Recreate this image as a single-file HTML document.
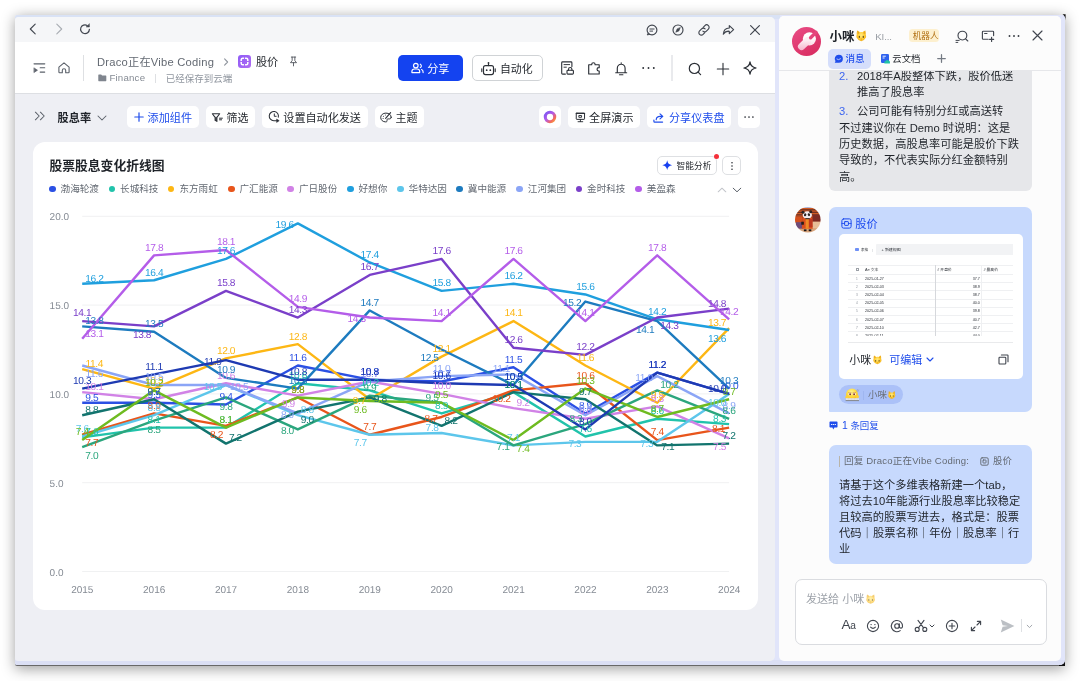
<!DOCTYPE html>
<html lang="zh-CN"><head><meta charset="utf-8"><title>股价 - 股息率</title>
<style>
*{box-sizing:border-box;margin:0;padding:0}
html,body{width:1080px;height:681px;overflow:hidden;background:#fff}
body{position:relative;font-family:"Liberation Sans","Noto Sans CJK SC",sans-serif;font-size:11.2px;color:#1F2329;-webkit-font-smoothing:antialiased}
.abs{position:absolute}
.win{position:absolute;left:14.7px;top:14.5px;width:1050.6px;height:651.7px;background:#E1E5FA;border-radius:3px 0 0 2px;box-shadow:0 2.5px 14px rgba(0,0,0,.38)}
.winb{position:absolute;left:14.7px;top:663px;width:1050.6px;height:3.4px;background:#686868;border-radius:0 0 0 2px}
.win2{position:absolute;left:14.7px;top:14.5px;width:1050.6px;height:650.5px;background:#E1E5FA;border-radius:3px 3.5px 5.5px 2px}
.blk{position:absolute;background:#111}
.main{position:absolute;left:14.9px;top:16.6px;width:759.8px;height:644.1px;background:#EEEFF4;border-radius:3.5px 5px 5px 3px;overflow:hidden}
.topbar{position:absolute;left:0;top:0;width:100%;height:25.3px;background:#F5F6F8}
.hdr{position:absolute;left:0;top:25.3px;width:100%;height:52.0px;background:#fff;border-bottom:1px solid #DDDFE3}
.t{position:absolute;white-space:nowrap;line-height:1}
.ic{position:absolute;overflow:visible}
.btn{position:absolute;top:106.2px;height:21.9px;background:#fff;border-radius:5px}
.card{position:absolute;left:33.1px;top:142px;width:724.5px;height:468.2px;background:#fff;border-radius:12px}
.chart{position:absolute;left:33px;top:142px}
.chart text{font-family:"Liberation Sans",sans-serif;text-rendering:geometricPrecision}
.chart .ax{font-size:10px;fill:#858B94}
.chart .lb text{font-size:10.2px;text-anchor:middle;letter-spacing:-0.4px}
.lg{position:absolute;top:184px;height:10px;font-size:9.6px;color:#646A73;white-space:nowrap;line-height:10px}
.lg i{position:absolute;left:0;top:1.7px;width:6.6px;height:6.6px;border-radius:50%}
.lg span{position:absolute;left:11.5px;top:0}
.chat{position:absolute;left:779.4px;top:16.2px;width:281.8px;height:644.4px;background:#FCFCFC;border-radius:5px;overflow:hidden}
#root{position:absolute;left:0;top:0;width:1080px;height:681px;overflow:hidden;will-change:transform;transform:translateZ(0)}
.wbot{position:absolute;left:14.7px;top:660px;width:1050.6px;height:5px;background:#DBDFF4;border-radius:0 0 5.5px 2px}
.wtop{position:absolute;left:14.7px;top:14.5px;width:765px;height:4px;background:#D9E2F5;border-radius:3px 0 0 0}
.em{font-size:0;line-height:0}
</style></head>
<body>
<div id="root">
<div class="win"></div><div class="winb"></div><div class="blk" style="left:1058.8px;top:657.6px;width:6.7px;height:8.9px"></div><div class="win2"></div><div class="wbot"></div><div class="wtop"></div><svg class="ic" style="left:1060px;top:12px" width="8" height="10" viewBox="1060 12 8 10"><path d="M1062.5 14.3 L1065.6 14.3 L1065.6 20.4 Q1065.3 15.8 1062.5 14.3 Z" fill="#111"/></svg>
<div class="main"><div class="topbar"></div><div class="hdr"></div></div>
<svg class="ic" style="left:28.80px;top:23.20px;" width="8" height="12" viewBox="0 0 8 12" fill="none" stroke="#41464F" stroke-width="1.1" stroke-linecap="round" stroke-linejoin="round"><path d="M6.2 1.1 L1.3 6 L6.2 10.9"/></svg>
<svg class="ic" style="left:54.90px;top:23.20px;" width="8" height="12" viewBox="0 0 8 12" fill="none" stroke="#A9ADB3" stroke-width="1.1" stroke-linecap="round" stroke-linejoin="round"><path d="M1.8 1.1 L6.7 6 L1.8 10.9"/></svg>
<svg class="ic" style="left:78.60px;top:23.40px;" width="12" height="12" viewBox="0 0 12 12" fill="none" stroke="#41464F" stroke-width="1.2" stroke-linecap="round" stroke-linejoin="round"><path d="M10.4 6.4 A4.4 4.4 0 1 1 8.2 2.4"/><path d="M10.4 1.0 V4.0 H7.4 Z" fill="#41464F" stroke-width="0.5"/></svg>
<svg class="ic" style="left:646.20px;top:23.70px;" width="12" height="12" viewBox="0 0 12 12" fill="none" stroke="#41464F" stroke-width="1.15" stroke-linecap="round" stroke-linejoin="round"><circle cx="6" cy="6" r="4.9"/><path d="M3.9 5 H8.1 M3.9 7.1 H6.6" stroke-width="1"/><path d="M2.2 9.2 L1.2 10.9 L3.6 10.4" stroke-width="1"/></svg>
<svg class="ic" style="left:672.10px;top:23.70px;" width="12" height="12" viewBox="0 0 12 12" fill="none" stroke="#41464F" stroke-width="1.15" stroke-linecap="round" stroke-linejoin="round"><circle cx="6" cy="6" r="5"/><path d="M8.2 3.8 L6.9 6.9 L3.8 8.2 L5.1 5.1 Z" fill="#41464F" stroke-width="0.6"/></svg>
<svg class="ic" style="left:697.70px;top:23.70px;" width="12" height="12" viewBox="0 0 12 12" fill="none" stroke="#41464F" stroke-width="1.15" stroke-linecap="round" stroke-linejoin="round"><path d="M5.2 3.3 L6.9 1.6 A2.45 2.45 0 0 1 10.4 5.1 L8.4 7.1 A2.45 2.45 0 0 1 4.9 7.1"/><path d="M6.8 8.7 L5.1 10.4 A2.45 2.45 0 0 1 1.6 6.9 L3.6 4.9 A2.45 2.45 0 0 1 7.1 4.9"/></svg>
<svg class="ic" style="left:722.40px;top:23.70px;" width="13" height="12" viewBox="0 0 13 12" fill="none" stroke="#41464F" stroke-width="1.15" stroke-linecap="round" stroke-linejoin="round"><path d="M7.3 1.6 L11.6 5.6 L7.3 9.6 V7.2 C4.6 7.1 2.6 8 1.3 10.2 C1.5 6.6 3.6 4.2 7.3 4 Z"/></svg>
<svg class="ic" style="left:748.80px;top:23.70px;" width="12" height="12" viewBox="0 0 12 12" fill="none" stroke="#41464F" stroke-width="1.2" stroke-linecap="round" stroke-linejoin="round"><path d="M1.6 1.6 L10.4 10.4 M10.4 1.6 L1.6 10.4"/></svg>
<svg class="ic" style="left:33.10px;top:62.20px;" width="13" height="12" viewBox="0 0 13 12" fill="none" stroke="#5A6069" stroke-width="1.15" stroke-linecap="round" stroke-linejoin="round"><path d="M1.1 1.8 H11.7" stroke-width="1.3"/><path d="M7.2 5.7 H11.7 M7.2 10.1 H11.7"/><path d="M1.2 6 L4.5 8.2 L1.2 10.4 Z" fill="#5A6069" stroke-width="0.6"/></svg>
<svg class="ic" style="left:57.95px;top:62.40px;" width="12" height="12" viewBox="0 0 12 12" fill="none" stroke="#5A6069" stroke-width="1.1" stroke-linecap="round" stroke-linejoin="round"><path d="M0.9 5.2 L6 0.9 L11.1 5.2 V10 Q11.1 10.7 10.4 10.7 H7.7 V8.4 A1.7 1.7 0 0 0 4.3 8.4 V10.7 H1.6 Q0.9 10.7 0.9 10 Z"/></svg>
<div class="abs" style="left:83.10px;top:55.30px;width:0.80px;height:25.50px;background:#DEE0E3"></div>
<div class="t" style="top:54.20px;height:16px;line-height:16px;font-size:11.2px;color:#646A73;left:97.00px;letter-spacing:0.23px;">Draco正在Vibe Coding</div>
<svg class="ic" style="left:223.30px;top:57.00px;" width="6" height="10" viewBox="0 0 6 10" fill="none" stroke="#8F959E" stroke-width="1.1" stroke-linecap="round" stroke-linejoin="round"><path d="M1.6 1.8 L4.6 5 L1.6 8.2"/></svg>
<svg class="ic" style="left:238px;top:54.8px" width="13" height="13" viewBox="0 0 13 13"><defs><linearGradient id="pg" x1="0" y1="0" x2="1" y2="1"><stop offset="0" stop-color="#8F5CF7"/><stop offset="1" stop-color="#B06CF2"/></linearGradient></defs><rect width="13" height="13" rx="3" fill="url(#pg)"/><rect x="3.2" y="3.2" width="6.6" height="6.6" rx="1.6" fill="none" stroke="#fff" stroke-width="1.5"/><path d="M6.5 2 V4 M6.5 9 V11 M2 6.5 H4 M9 6.5 H11" stroke="#A468F4" stroke-width="1.1"/></svg>
<div class="t" style="top:54.00px;height:16px;line-height:16px;font-size:11.1px;color:#1F2329;left:255.90px;">股价</div>
<svg class="ic" style="left:289.10px;top:56.10px;" width="9" height="10.8" viewBox="0 0 10 12" fill="none" stroke="#51565D" stroke-width="1.0" stroke-linecap="round" stroke-linejoin="round"><path d="M2.6 1.2 H7.4 M3.5 1.2 V5.2 L1.6 7.4 H8.4 L6.5 5.2 V1.2 M5 7.4 V11"/></svg>
<svg class="ic" style="left:97.8px;top:74.2px" width="8.6" height="7.7" viewBox="0 0 9 8"><path d="M0.3 1 Q0.3 0.4 0.9 0.4 H3.3 L4.3 1.5 H8.1 Q8.7 1.5 8.7 2.1 V6.9 Q8.7 7.5 8.1 7.5 H0.9 Q0.3 7.5 0.3 6.9 Z" fill="#7F858E"/></svg>
<div class="t" style="top:70.30px;height:16px;line-height:16px;font-size:9.7px;color:#858B94;left:109.40px;letter-spacing:0.2px;">Finance</div>
<div class="abs" style="left:155.40px;top:73.50px;width:0.70px;height:9.50px;background:#DEE0E3"></div>
<div class="t" style="top:70.60px;height:16px;line-height:16px;font-size:9.5px;color:#8F959E;left:165.70px;">已经保存到云端</div>
<div class="abs" style="left:398.40px;top:55.20px;width:64.60px;height:25.90px;background:#1443F0;border-radius:5px"></div>
<svg class="ic" style="left:410.70px;top:62.20px;" width="13" height="12" viewBox="0 0 13 12" fill="none" stroke="#fff" stroke-width="1.15" stroke-linecap="round" stroke-linejoin="round"><circle cx="4.8" cy="3.6" r="2.3"/><path d="M0.9 10.6 V9.6 A2.6 2.6 0 0 1 3.5 7 H6.1 A2.6 2.6 0 0 1 8.7 9.6 V10.6 Z"/><path d="M9.3 2.2 A1.9 1.9 0 0 1 9.3 5.6 M10.6 7.6 A2.6 2.6 0 0 1 12.1 10 V10.6"/></svg>
<div class="t" style="top:60.90px;height:16px;line-height:16px;font-size:11.1px;color:#fff;left:427.20px;">分享</div>
<div class="abs" style="left:472.40px;top:55.20px;width:70.40px;height:25.90px;background:#fff;border:1px solid #D0D3D6;border-radius:5px"></div>
<svg class="ic" style="left:481.40px;top:60.50px;" width="15" height="15" viewBox="0 0 15 15" fill="none" stroke="#2B2F36" stroke-width="1.15" stroke-linecap="round" stroke-linejoin="round"><rect x="2.5" y="4.6" width="10" height="9" rx="2"/><path d="M7.5 4.6 V2.6 M0.8 7.8 V10.6 M14.2 7.8 V10.6"/><circle cx="7.5" cy="1.9" r="0.9" fill="#2B2F36" stroke="none"/><circle cx="5.7" cy="9.2" r="0.9" fill="#2B2F36" stroke="none"/><circle cx="9.3" cy="9.2" r="0.9" fill="#2B2F36" stroke="none"/></svg>
<div class="t" style="top:61.00px;height:16px;line-height:16px;font-size:10.9px;color:#1F2329;left:499.90px;">自动化</div>
<svg class="ic" style="left:560.60px;top:61.15px;" width="13" height="14" viewBox="0 0 13 14" fill="none" stroke="#2B2F36" stroke-width="1.1" stroke-linecap="round" stroke-linejoin="round"><path d="M10.9 5.6 V1.8 Q10.9 0.9 10 0.9 H1.6 Q0.7 0.9 0.7 1.8 V12.2 Q0.7 13.1 1.6 13.1 H4.4"/><path d="M3 3.6 H8.6 M3 6.2 H5.4" stroke-width="0.95"/><rect x="6" y="9.2" width="6.4" height="3.9" rx="0.9"/><path d="M7.5 9.2 V8.2 A1.7 1.7 0 0 1 10.9 8.2 V9.2"/></svg>
<svg class="ic" style="left:588.00px;top:61.80px;" width="12" height="12.6" viewBox="0 0 12 12.6" fill="none" stroke="#2B2F36" stroke-width="1.15" stroke-linecap="round" stroke-linejoin="round"><path d="M0.7 2.8 H3.7 V2.4 A1.7 1.7 0 0 1 7.1 2.4 V2.8 H11.2 V5.7 H10.7 A1.65 1.65 0 0 0 10.7 9 H11.2 V12 H0.7 Z"/></svg>
<svg class="ic" style="left:614.90px;top:61.60px;" width="12.4" height="13.6" viewBox="0 0 12.4 13.6" fill="none" stroke="#2B2F36" stroke-width="1.15" stroke-linecap="round" stroke-linejoin="round"><path d="M2.3 10.6 V6.3 A3.9 4.1 0 0 1 10.1 6.3 V10.6 M0.7 10.8 H11.7 M4.5 12.8 H7.9 M6.2 0.9 V1.6"/></svg>
<svg class="ic" style="left:642.10px;top:66.10px;" width="13" height="4" viewBox="0 0 13 4" fill="#2B2F36" stroke="none" stroke-width="1.2" stroke-linecap="round" stroke-linejoin="round"><circle cx="1.2" cy="2" r="0.95"/><circle cx="6.5" cy="2" r="0.95"/><circle cx="11.8" cy="2" r="0.95"/></svg>
<div class="abs" style="left:671.30px;top:55.00px;width:1.50px;height:26.20px;background:#E9EAED"></div>
<svg class="ic" style="left:688.10px;top:61.50px;" width="14" height="14" viewBox="0 0 14 14" fill="none" stroke="#2B2F36" stroke-width="1.2" stroke-linecap="round" stroke-linejoin="round"><circle cx="6.4" cy="6.4" r="5.1"/><path d="M10.1 10.1 L12.6 12.6"/></svg>
<svg class="ic" style="left:716.10px;top:61.50px;" width="14" height="14" viewBox="0 0 14 14" fill="none" stroke="#2B2F36" stroke-width="1.1" stroke-linecap="round" stroke-linejoin="round"><path d="M7 1.3 V12.7 M1.3 7 H12.7"/></svg>
<svg class="ic" style="left:743.40px;top:61.10px;" width="14.4" height="14.4" viewBox="0 0 14.4 14.4" fill="none" stroke="#2B2F36" stroke-width="1.2" stroke-linecap="round" stroke-linejoin="round"><path d="M7 0.9 C7.5 4.6 9.2 6.4 13.1 7 C9.2 7.6 7.5 9.4 7 13.1 C6.5 9.4 4.8 7.6 0.9 7 C4.8 6.4 6.5 4.6 7 0.9 Z"/></svg>
<svg class="ic" style="left:34.00px;top:111.30px;" width="12" height="10" viewBox="0 0 12 10" fill="none" stroke="#5A6069" stroke-width="1.05" stroke-linecap="round" stroke-linejoin="round"><path d="M1.4 1.2 L5.2 5 L1.4 8.8 M6.4 1.2 L10.2 5 L6.4 8.8"/></svg>
<div class="t" style="top:110.00px;height:16px;line-height:16px;font-size:11.2px;color:#1F2329;left:57.50px;font-weight:700;">股息率</div>
<svg class="ic" style="left:96.90px;top:114.90px;" width="10" height="6" viewBox="0 0 10 6" fill="none" stroke="#5A6069" stroke-width="1.05" stroke-linecap="round" stroke-linejoin="round"><path d="M1 1 L5 5 L9 1"/></svg>
<div class="abs" style="left:127.00px;top:106.20px;width:71.80px;height:21.90px;background:#fff;border-radius:5px"></div>
<svg class="ic" style="left:133.60px;top:112.30px;" width="10" height="10" viewBox="0 0 10 10" fill="none" stroke="#1F4DEB" stroke-width="1.2" stroke-linecap="round" stroke-linejoin="round"><path d="M5 0.8 V9.2 M0.8 5 H9.2"/></svg>
<div class="t" style="top:109.90px;height:16px;line-height:16px;font-size:11.15px;color:#1F4DEB;left:147.50px;">添加组件</div>
<div class="abs" style="left:205.90px;top:106.20px;width:49.10px;height:21.90px;background:#fff;border-radius:5px"></div>
<svg class="ic" style="left:211.00px;top:112.60px;" width="12" height="10" viewBox="0 0 12 10" fill="none" stroke="#2B2F36" stroke-width="1.05" stroke-linecap="round" stroke-linejoin="round"><path d="M1.3 0.8 H8.7 L5.9 4.4 V8.4 L4.1 7.4 V4.4 Z"/><path d="M4.6 4.6 V7.4 L5.4 7.9 V4.6 Z" fill="#2B2F36" stroke-width="0.6"/><path d="M8.5 5.2 H11.4 M8.5 6.8 H10.6" stroke-width="1"/></svg>
<div class="t" style="top:109.90px;height:16px;line-height:16px;font-size:10.9px;color:#1F2329;left:226.60px;">筛选</div>
<div class="abs" style="left:262.00px;top:106.20px;width:106.00px;height:21.90px;background:#fff;border-radius:5px"></div>
<svg class="ic" style="left:267.50px;top:111.40px;" width="12" height="12" viewBox="0 0 12 12" fill="none" stroke="#2B2F36" stroke-width="1.05" stroke-linecap="round" stroke-linejoin="round"><path d="M10.3 6.2 A4.6 4.6 0 1 0 5.8 9.7 H9"/><path d="M6.3 2.9 V5.3 H8.2" stroke-width="1"/><path d="M8.9 8.2 L11.2 9.7 L8.9 11.2 Z" fill="#2B2F36" stroke-width="0.6"/></svg>
<div class="t" style="top:109.90px;height:16px;line-height:16px;font-size:11.1px;color:#1F2329;left:283.30px;">设置自动化发送</div>
<div class="abs" style="left:375.00px;top:106.20px;width:49.30px;height:21.90px;background:#fff;border-radius:5px"></div>
<svg class="ic" style="left:380.30px;top:111.90px;" width="12" height="11" viewBox="0 0 12 11" fill="none" stroke="#2B2F36" stroke-width="1.0" stroke-linecap="round" stroke-linejoin="round"><path d="M11.2 5.3 C11.2 2.7 8.8 1.1 5.9 1.1 C3 1.1 0.7 3 0.7 5.5 C0.7 8 2.9 9.9 5.7 9.9 C6.9 9.9 7.3 9.2 7 8.4 C6.7 7.5 7.3 6.9 8.2 6.9 H9.5 C10.5 6.9 11.2 6.3 11.2 5.3 Z"/><path d="M10.6 0.6 L5.6 6.3" stroke-width="1.1"/><circle cx="3.4" cy="4.2" r="0.55" fill="#2B2F36" stroke="none"/><circle cx="3.1" cy="6.5" r="0.55" fill="#2B2F36" stroke="none"/><circle cx="5.4" cy="3" r="0.5" fill="#2B2F36" stroke="none"/></svg>
<div class="t" style="top:109.90px;height:16px;line-height:16px;font-size:11.0px;color:#1F2329;left:395.50px;">主题</div>
<div class="abs" style="left:538.90px;top:106.20px;width:22.40px;height:21.90px;background:#fff;border-radius:5px"></div>
<svg class="ic" style="left:543.2px;top:110.4px" width="14" height="14" viewBox="0 0 14 14"><defs><linearGradient id="rg" x1="0" y1="0" x2="1" y2="1"><stop offset="0" stop-color="#7A55F5"/><stop offset="0.45" stop-color="#B45CE4"/><stop offset="0.8" stop-color="#F56A5A"/><stop offset="1" stop-color="#F8A33E"/></linearGradient></defs><circle cx="7" cy="7" r="4.7" fill="none" stroke="url(#rg)" stroke-width="3.1"/></svg>
<div class="abs" style="left:568.10px;top:106.20px;width:71.90px;height:21.90px;background:#fff;border-radius:5px"></div>
<svg class="ic" style="left:574.60px;top:112.40px;" width="10.8" height="10.8" viewBox="0 0 12 12" fill="none" stroke="#2B2F36" stroke-width="1.1" stroke-linecap="round" stroke-linejoin="round"><rect x="1.4" y="1.4" width="9.2" height="6.8" rx="0.6"/><path d="M1.4 1.6 H10.6" stroke-width="1.5"/><path d="M6 8.2 V10.6 M3.4 10.8 H8.6 M4.7 3.9 H7.3 V5.9 H4.7 Z" stroke-width="1.05"/></svg>
<div class="t" style="top:109.90px;height:16px;line-height:16px;font-size:11.1px;color:#1F2329;left:589.10px;">全屏演示</div>
<div class="abs" style="left:647.20px;top:106.20px;width:83.90px;height:21.90px;background:#fff;border-radius:5px"></div>
<svg class="ic" style="left:653.40px;top:112.60px;" width="11" height="10" viewBox="0 0 11 10" fill="none" stroke="#1F4DEB" stroke-width="1.15" stroke-linecap="round" stroke-linejoin="round"><path d="M7 0.9 L9.8 3.4 L7 5.9 M9.6 3.4 H7 C4.8 3.4 3.4 4.6 3.2 6.6"/><path d="M0.9 7 V8.4 Q0.9 9.1 1.6 9.1 H9.6"/></svg>
<div class="t" style="top:109.90px;height:16px;line-height:16px;font-size:11.1px;color:#1F4DEB;left:669.00px;">分享仪表盘</div>
<div class="abs" style="left:737.80px;top:106.20px;width:22.40px;height:21.90px;background:#fff;border-radius:5px"></div>
<svg class="ic" style="left:743.00px;top:115.30px;" width="12" height="4" viewBox="0 0 12 4" fill="#2B2F36" stroke="none" stroke-width="1.2" stroke-linecap="round" stroke-linejoin="round"><circle cx="2.1" cy="2" r="0.85"/><circle cx="6" cy="2" r="0.85"/><circle cx="9.9" cy="2" r="0.85"/></svg>
<div class="card"></div>
<div class="t" style="top:157.30px;height:18px;line-height:18px;font-size:12.8px;color:#1F2329;left:49.40px;font-weight:700;">股票股息变化折线图</div>
<div class="abs" style="left:657.20px;top:155.90px;width:59.50px;height:18.80px;background:#fff;border:1px solid #DEE0E3;border-radius:5px"></div>
<svg class="ic" style="left:662.3px;top:160.3px" width="10.4" height="10.4" viewBox="0 0 14 14"><path d="M7 0.4 C7.6 4.4 9.6 6.4 13.6 7 C9.6 7.6 7.6 9.6 7 13.6 C6.4 9.6 4.4 7.6 0.4 7 C4.4 6.4 6.4 4.4 7 0.4 Z" fill="#1740F0"/></svg>
<div class="t" style="top:158.20px;height:16px;line-height:16px;font-size:8.7px;color:#1F2329;left:676.60px;">智能分析</div>
<div class="abs" style="left:713.9px;top:154px;width:5.2px;height:5.2px;border-radius:50%;background:#F5303A"></div>
<div class="abs" style="left:722.20px;top:155.90px;width:18.90px;height:18.80px;background:#fff;border:1px solid #DEE0E3;border-radius:5px"></div>
<svg class="ic" style="left:729.70px;top:159.60px;" width="4" height="12" viewBox="0 0 4 12" fill="#2B2F36" stroke="none" stroke-width="1.2" stroke-linecap="round" stroke-linejoin="round"><circle cx="2" cy="2.8" r="0.8"/><circle cx="2" cy="6" r="0.8"/><circle cx="2" cy="9.2" r="0.8"/></svg>
<div class="lg" style="left:49.1px"><i style="background:#2B50E4"></i><span>渤海轮渡</span></div>
<div class="lg" style="left:108.6px"><i style="background:#21C3AB"></i><span>长城科技</span></div>
<div class="lg" style="left:167.9px"><i style="background:#FDB714"></i><span>东方雨虹</span></div>
<div class="lg" style="left:228.0px"><i style="background:#E8551B"></i><span>广汇能源</span></div>
<div class="lg" style="left:287.4px"><i style="background:#D182E6"></i><span>广日股份</span></div>
<div class="lg" style="left:347.0px"><i style="background:#1F9FDE"></i><span>好想你</span></div>
<div class="lg" style="left:397.1px"><i style="background:#5DC6EB"></i><span>华特达因</span></div>
<div class="lg" style="left:456.3px"><i style="background:#1D7BBF"></i><span>冀中能源</span></div>
<div class="lg" style="left:516.3px"><i style="background:#8BA5F6"></i><span>江河集团</span></div>
<div class="lg" style="left:575.6px"><i style="background:#7A3FC9"></i><span>金时科技</span></div>
<div class="lg" style="left:635.3px"><i style="background:#B45DE9"></i><span>美盈森</span></div>
<svg class="ic" style="left:716.70px;top:186.90px;" width="10" height="6" viewBox="0 0 10 6" fill="none" stroke="#C2C5CA" stroke-width="1.05" stroke-linecap="round" stroke-linejoin="round"><path d="M1.2 4.8 L5 1.2 L8.8 4.8"/></svg>
<svg class="ic" style="left:732.30px;top:187.20px;" width="10" height="6" viewBox="0 0 10 6" fill="none" stroke="#5A6069" stroke-width="1.0" stroke-linecap="round" stroke-linejoin="round"><path d="M1.2 1.2 L5 4.8 L8.8 1.2"/></svg>
<svg class="chart" width="725" height="469" viewBox="33 142 725 469">
<line x1="82.2" x2="729.1" y1="571.50" y2="571.50" stroke="#F0F1F2" stroke-width="1"/>
<text class="ax" x="49.6" y="575.90">0.0</text>
<line x1="82.2" x2="729.1" y1="482.70" y2="482.70" stroke="#F0F1F2" stroke-width="1"/>
<text class="ax" x="49.6" y="486.88">5.0</text>
<line x1="82.2" x2="729.1" y1="393.90" y2="393.90" stroke="#F0F1F2" stroke-width="1"/>
<text class="ax" x="49.6" y="397.85">10.0</text>
<line x1="82.2" x2="729.1" y1="305.10" y2="305.10" stroke="#F0F1F2" stroke-width="1"/>
<text class="ax" x="49.6" y="308.82">15.0</text>
<line x1="82.2" x2="729.1" y1="216.30" y2="216.30" stroke="#F0F1F2" stroke-width="1"/>
<text class="ax" x="49.6" y="219.80">20.0</text>
<text class="ax" text-anchor="middle" x="82.30" y="593.4">2015</text>
<text class="ax" text-anchor="middle" x="154.18" y="593.4">2016</text>
<text class="ax" text-anchor="middle" x="226.06" y="593.4">2017</text>
<text class="ax" text-anchor="middle" x="297.94" y="593.4">2018</text>
<text class="ax" text-anchor="middle" x="369.82" y="593.4">2019</text>
<text class="ax" text-anchor="middle" x="441.70" y="593.4">2020</text>
<text class="ax" text-anchor="middle" x="513.58" y="593.4">2021</text>
<text class="ax" text-anchor="middle" x="585.46" y="593.4">2022</text>
<text class="ax" text-anchor="middle" x="657.34" y="593.4">2023</text>
<text class="ax" text-anchor="middle" x="729.22" y="593.4">2024</text>
<polyline fill="none" stroke="#2B50E4" stroke-width="2.4" stroke-linejoin="round" stroke-linecap="butt" points="82.20,402.78 154.08,402.78 225.96,404.56 297.84,365.48 369.72,379.69 441.60,381.47 513.48,367.26 585.36,413.44 657.24,372.59 729.12,393.90"/>
<polyline fill="none" stroke="#21C3AB" stroke-width="2.4" stroke-linejoin="round" stroke-linecap="butt" points="82.20,437.41 154.08,427.64 225.96,427.64 297.84,383.24 369.72,390.35 441.60,413.44 513.48,392.12 585.36,436.52 657.24,418.76 729.12,424.09"/>
<polyline fill="none" stroke="#FDB714" stroke-width="2.4" stroke-linejoin="round" stroke-linecap="butt" points="82.20,369.04 154.08,388.57 225.96,358.38 297.84,344.17 369.72,399.23 441.60,356.60 513.48,321.08 585.36,365.48 657.24,402.78 729.12,328.19"/>
<polyline fill="none" stroke="#E8551B" stroke-width="2.4" stroke-linejoin="round" stroke-linecap="butt" points="82.20,434.75 154.08,413.44 225.96,425.87 297.84,397.45 369.72,434.75 441.60,416.99 513.48,390.35 585.36,383.24 657.24,440.08 729.12,427.64"/>
<polyline fill="none" stroke="#D182E6" stroke-width="2.4" stroke-linejoin="round" stroke-linecap="butt" points="82.20,392.12 154.08,399.23 225.96,383.24 297.84,395.68 369.72,381.47 441.60,393.90 513.48,408.11 585.36,418.76 657.24,406.33 729.12,438.30"/>
<polyline fill="none" stroke="#1F9FDE" stroke-width="2.4" stroke-linejoin="round" stroke-linecap="butt" points="82.20,283.79 154.08,280.24 225.96,258.92 297.84,223.40 369.72,262.48 441.60,290.89 513.48,283.79 585.36,294.44 657.24,319.31 729.12,329.96"/>
<polyline fill="none" stroke="#5DC6EB" stroke-width="2.4" stroke-linejoin="round" stroke-linecap="butt" points="82.20,436.52 154.08,415.21 225.96,385.02 297.84,415.21 369.72,434.75 441.60,432.97 513.48,445.40 585.36,441.85 657.24,441.85 729.12,393.90"/>
<polyline fill="none" stroke="#1D7BBF" stroke-width="2.4" stroke-linejoin="round" stroke-linecap="butt" points="82.20,326.41 154.08,331.74 225.96,377.92 297.84,388.57 369.72,310.43 441.60,349.50 513.48,385.02 585.36,301.55 657.24,321.08 729.12,388.57"/>
<polyline fill="none" stroke="#8BA5F6" stroke-width="2.4" stroke-linejoin="round" stroke-linecap="butt" points="82.20,365.48 154.08,385.02 225.96,385.02 297.84,413.44 369.72,381.47 441.60,376.14 513.48,374.36 585.36,415.21 657.24,376.14 729.12,413.44"/>
<polyline fill="none" stroke="#7A3FC9" stroke-width="2.4" stroke-linejoin="round" stroke-linecap="butt" points="82.20,321.08 154.08,326.41 225.96,290.89 297.84,317.53 369.72,274.91 441.60,258.92 513.48,347.72 585.36,354.83 657.24,317.53 729.12,308.65"/>
<polyline fill="none" stroke="#B45DE9" stroke-width="2.4" stroke-linejoin="round" stroke-linecap="butt" points="82.20,338.84 154.08,255.37 225.96,250.04 297.84,306.88 369.72,317.53 441.60,321.08 513.48,258.92 585.36,321.08 657.24,255.37 729.12,319.31"/>
<polyline fill="none" stroke="#2BA67D" stroke-width="2.4" stroke-linejoin="round" stroke-linecap="butt" points="82.20,447.18 154.08,420.54 225.96,397.45 297.84,429.42 369.72,395.68 441.60,402.78 513.48,445.40 585.36,424.09 657.24,390.35 729.12,418.76"/>
<polyline fill="none" stroke="#12746E" stroke-width="2.4" stroke-linejoin="round" stroke-linecap="butt" points="82.20,415.21 154.08,399.23 225.96,443.63 297.84,411.66 369.72,397.45 441.60,425.87 513.48,392.12 585.36,399.23 657.24,445.40 729.12,443.63"/>
<polyline fill="none" stroke="#6EBB20" stroke-width="2.4" stroke-linejoin="round" stroke-linecap="butt" points="82.20,440.08 154.08,390.35 225.96,427.64 297.84,397.45 369.72,401.00 441.60,402.78 513.48,440.08 585.36,388.57 657.24,416.99 729.12,399.23"/>
<polyline fill="none" stroke="#1E3AB2" stroke-width="2.4" stroke-linejoin="round" stroke-linecap="butt" points="82.20,388.57 154.08,374.36 225.96,360.16 297.84,379.69 369.72,379.69 441.60,383.24 513.48,385.02 585.36,429.42 657.24,372.59 729.12,393.90"/>
<g class="lb" fill="#2B50E4">
<text x="91.7" y="400.6">9.5</text>
<text x="154.1" y="398.1">9.5</text>
<text x="226.0" y="399.9">9.4</text>
<text x="297.8" y="360.8">11.6</text>
<text x="369.7" y="375.0">10.8</text>
<text x="441.6" y="376.8">10.7</text>
<text x="513.5" y="362.6">11.5</text>
<text x="585.4" y="408.8">8.9</text>
<text x="657.2" y="367.9">11.2</text>
<text x="729.1" y="389.2">10.0</text>
</g>
<g class="lb" fill="#21C3AB">
<text x="91.7" y="435.2">7.6</text>
<text x="154.1" y="423.0">8.1</text>
<text x="226.0" y="423.0">8.1</text>
<text x="297.8" y="378.6">10.6</text>
<text x="369.7" y="385.7">10.2</text>
<text x="441.6" y="408.8">8.9</text>
<text x="513.5" y="387.5">10.1</text>
<text x="585.4" y="431.9">7.6</text>
<text x="657.2" y="414.1">8.6</text>
<text x="719.6" y="421.9">8.3</text>
</g>
<g class="lb" fill="#FDB714">
<text x="94.3" y="366.8">11.4</text>
<text x="154.1" y="383.9">10.3</text>
<text x="226.0" y="353.7">12.0</text>
<text x="297.8" y="339.5">12.8</text>
<text x="359.2" y="403.9">9.7</text>
<text x="441.6" y="352.0">12.1</text>
<text x="513.5" y="316.4">14.1</text>
<text x="585.4" y="360.8">11.6</text>
<text x="657.2" y="398.1">9.5</text>
<text x="717.0" y="326.0">13.7</text>
</g>
<g class="lb" fill="#E8551B">
<text x="91.7" y="446.4">7.7</text>
<text x="154.1" y="408.8">8.9</text>
<text x="216.5" y="437.6">8.2</text>
<text x="297.8" y="392.8">9.8</text>
<text x="369.7" y="430.1">7.7</text>
<text x="431.1" y="421.7">8.7</text>
<text x="501.4" y="402.0">10.2</text>
<text x="585.4" y="378.6">10.6</text>
<text x="657.2" y="435.4">7.4</text>
<text x="718.6" y="432.3">8.1</text>
</g>
<g class="lb" fill="#D182E6">
<text x="94.3" y="389.9">10.1</text>
<text x="154.1" y="394.6">9.7</text>
<text x="226.0" y="378.6">10.6</text>
<text x="288.4" y="407.4">9.9</text>
<text x="369.7" y="376.8">10.7</text>
<text x="441.6" y="389.2">10.0</text>
<text x="523.0" y="405.9">9.2</text>
<text x="585.4" y="414.1">8.6</text>
<text x="657.2" y="401.7">9.3</text>
<text x="719.6" y="450.0">7.5</text>
</g>
<g class="lb" fill="#1F9FDE">
<text x="94.3" y="281.6">16.2</text>
<text x="154.1" y="275.6">16.4</text>
<text x="226.0" y="254.3">17.6</text>
<text x="284.7" y="228.1">19.6</text>
<text x="369.7" y="257.8">17.4</text>
<text x="441.6" y="286.2">15.8</text>
<text x="513.5" y="279.1">16.2</text>
<text x="585.4" y="289.8">15.6</text>
<text x="657.2" y="314.7">14.2</text>
<text x="717.0" y="341.7">13.6</text>
</g>
<g class="lb" fill="#5DC6EB">
<text x="82.2" y="431.9">7.6</text>
<text x="154.1" y="410.6">8.8</text>
<text x="212.8" y="389.7">10.5</text>
<text x="307.3" y="413.0">8.8</text>
<text x="360.2" y="446.4">7.7</text>
<text x="432.1" y="430.8">7.8</text>
<text x="513.5" y="440.8">7.1</text>
<text x="574.9" y="446.6">7.3</text>
<text x="646.8" y="446.6">7.3</text>
<text x="717.0" y="405.6">10.0</text>
</g>
<g class="lb" fill="#1D7BBF">
<text x="94.3" y="324.2">13.8</text>
<text x="154.1" y="327.1">13.5</text>
<text x="226.0" y="373.3">10.9</text>
<text x="297.8" y="383.9">10.3</text>
<text x="369.7" y="305.8">14.7</text>
<text x="429.5" y="361.2">12.5</text>
<text x="513.5" y="380.4">10.5</text>
<text x="572.2" y="306.2">15.2</text>
<text x="645.1" y="332.8">14.1</text>
<text x="729.1" y="383.9">10.3</text>
</g>
<g class="lb" fill="#8BA5F6">
<text x="94.3" y="377.2">11.6</text>
<text x="154.1" y="380.4">10.5</text>
<text x="239.1" y="389.7">10.5</text>
<text x="287.4" y="418.1">8.9</text>
<text x="369.7" y="376.8">10.7</text>
<text x="441.6" y="371.5">11.0</text>
<text x="501.4" y="372.2">11.1</text>
<text x="585.4" y="410.6">8.8</text>
<text x="644.1" y="380.8">11.0</text>
<text x="729.1" y="408.8">8.9</text>
</g>
<g class="lb" fill="#7A3FC9">
<text x="82.2" y="316.4">14.1</text>
<text x="142.0" y="338.1">13.8</text>
<text x="226.0" y="286.2">15.8</text>
<text x="297.8" y="312.9">14.3</text>
<text x="369.7" y="270.3">16.7</text>
<text x="441.6" y="254.3">17.6</text>
<text x="513.5" y="343.1">12.6</text>
<text x="585.4" y="350.2">12.2</text>
<text x="669.4" y="329.2">14.3</text>
<text x="717.0" y="306.5">14.8</text>
</g>
<g class="lb" fill="#B45DE9">
<text x="94.3" y="336.6">13.1</text>
<text x="154.1" y="250.7">17.8</text>
<text x="226.0" y="245.4">18.1</text>
<text x="297.8" y="302.2">14.9</text>
<text x="356.6" y="322.2">14.3</text>
<text x="441.6" y="316.4">14.1</text>
<text x="513.5" y="254.3">17.6</text>
<text x="585.4" y="316.4">14.1</text>
<text x="657.2" y="250.7">17.8</text>
<text x="729.1" y="314.7">14.2</text>
</g>
<g class="lb" fill="#2BA67D">
<text x="91.7" y="458.9">7.0</text>
<text x="154.1" y="433.0">8.5</text>
<text x="226.0" y="410.0">9.8</text>
<text x="287.4" y="434.1">8.0</text>
<text x="369.7" y="391.0">9.9</text>
<text x="432.1" y="400.6">9.5</text>
<text x="503.0" y="450.1">7.1</text>
<text x="575.9" y="421.9">8.3</text>
<text x="669.4" y="388.1">10.2</text>
<text x="729.1" y="414.1">8.6</text>
</g>
<g class="lb" fill="#12746E">
<text x="91.7" y="413.0">8.8</text>
<text x="154.1" y="394.6">9.7</text>
<text x="235.4" y="441.4">7.2</text>
<text x="307.3" y="423.4">9.0</text>
<text x="380.2" y="402.2">9.8</text>
<text x="451.1" y="423.7">8.2</text>
<text x="513.5" y="387.5">10.1</text>
<text x="585.4" y="394.6">9.7</text>
<text x="667.7" y="450.1">7.1</text>
<text x="729.1" y="439.0">7.2</text>
</g>
<g class="lb" fill="#6EBB20">
<text x="82.2" y="435.4">7.4</text>
<text x="154.1" y="385.7">10.2</text>
<text x="226.0" y="423.0">8.1</text>
<text x="297.8" y="392.8">9.8</text>
<text x="360.2" y="412.7">9.6</text>
<text x="441.6" y="398.1">9.5</text>
<text x="523.0" y="451.8">7.4</text>
<text x="585.4" y="383.9">10.3</text>
<text x="657.2" y="412.3">8.7</text>
<text x="729.1" y="394.6">9.7</text>
</g>
<g class="lb" fill="#1E3AB2">
<text x="82.2" y="383.9">10.3</text>
<text x="154.1" y="369.7">11.1</text>
<text x="212.8" y="364.9">11.9</text>
<text x="297.8" y="375.0">10.8</text>
<text x="369.7" y="375.0">10.8</text>
<text x="441.6" y="378.6">10.6</text>
<text x="513.5" y="380.4">10.5</text>
<text x="585.4" y="424.8">8.0</text>
<text x="657.2" y="367.9">11.2</text>
<text x="717.0" y="391.7">10.0</text>
</g>
</svg>
<div class="chat"></div>
<div class="abs" style="left:829.30px;top:60.00px;width:202.80px;height:130.60px;background:#E6E7EA;border-radius:6px"></div>
<div class="t" style="top:67.80px;height:16px;line-height:16px;font-size:11.2px;color:#3D66F0;left:839.00px;">2.</div>
<div class="t" style="top:67.80px;height:16px;line-height:16px;font-size:11.25px;color:#1F2329;left:857.00px;">2018年A股整体下跌，股价低迷</div>
<div class="t" style="top:84.40px;height:16px;line-height:16px;font-size:11.25px;color:#1F2329;left:857.00px;">推高了股息率</div>
<div class="t" style="top:103.00px;height:16px;line-height:16px;font-size:11.2px;color:#3D66F0;left:839.00px;">3.</div>
<div class="t" style="top:103.00px;height:16px;line-height:16px;font-size:11.25px;color:#1F2329;left:857.00px;">公司可能有特别分红或高送转</div>
<div class="t" style="top:119.90px;height:16px;line-height:16px;font-size:11.25px;color:#1F2329;left:839.00px;">不过建议你在 Demo 时说明：这是</div>
<div class="t" style="top:136.10px;height:16px;line-height:16px;font-size:11.25px;color:#1F2329;left:839.00px;">历史数据，高股息率可能是股价下跌</div>
<div class="t" style="top:152.30px;height:16px;line-height:16px;font-size:11.25px;color:#1F2329;left:839.00px;">导致的，不代表实际分红金额特别</div>
<div class="t" style="top:168.70px;height:16px;line-height:16px;font-size:11.25px;color:#1F2329;left:839.00px;">高。</div>
<div class="abs" style="left:779.40px;top:16.20px;width:281.80px;height:54.90px;background:#FCFCFC;border-bottom:1px solid #E6E7EA;border-radius:5px 5px 0 0"></div>
<svg class="ic" style="left:792px;top:26.9px" width="29" height="29" viewBox="0 0 29 29"><defs><linearGradient id="av" x1="0" y1="0" x2="0.6" y2="1"><stop offset="0" stop-color="#E94D86"/><stop offset="1" stop-color="#DA2F63"/></linearGradient><linearGradient id="wr" x1="0" y1="0" x2="0" y2="1"><stop offset="0.35" stop-color="#fff"/><stop offset="1" stop-color="#FBDCE7"/></linearGradient><linearGradient id="wr2" gradientUnits="userSpaceOnUse" x1="0" y1="13" x2="0" y2="23"><stop offset="0" stop-color="#FDEEF3"/><stop offset="1" stop-color="#F6B6CD"/></linearGradient></defs><circle cx="14.5" cy="14.5" r="14.5" fill="url(#av)"/><g transform="rotate(0)"><circle cx="17.4" cy="11.8" r="6.6" fill="url(#wr)"/><path d="M15.4 13.8 L9.6 19.5" stroke="url(#wr2)" stroke-width="7.3" stroke-linecap="round" fill="none"/><path d="M18.6 10.8 L24 5.4" stroke="#E5467C" stroke-width="3.4" stroke-linecap="round"/></g></svg>
<div class="t" style="top:27.80px;height:18px;line-height:18px;font-size:12.5px;color:#1F2329;left:829.50px;font-weight:700;">小咪<span class="em">🐱</span></div>
<svg class="ic" style="left:856.30px;top:29.63px;opacity:1" width="10.5" height="11.45" viewBox="0 0 20 22"><defs><radialGradient id="cg1" cx="0.5" cy="0.45" r="0.6"><stop offset="0" stop-color="#FFEB84"/><stop offset="0.6" stop-color="#FFCB2E"/><stop offset="1" stop-color="#EBA51C"/></radialGradient></defs><path d="M2.2 1 Q5.5 2.2 7.6 4.4 Q10 3.6 12.4 4.4 Q14.5 2.2 17.8 1 Q19 5 18.6 8.6 Q20 12 19 14.6 Q17 19.5 10 21.5 Q3 19.5 1 14.6 Q0 12 1.4 8.6 Q1 5 2.2 1 Z" fill="url(#cg1)"/><path d="M3.6 3.4 L6.4 5.8 L3.5 7.6 Z M16.4 3.4 L13.6 5.8 L16.5 7.6 Z" fill="#D68A14" opacity="0.75"/><ellipse cx="6.2" cy="13.3" rx="1" ry="2.1" fill="#3A2812"/><ellipse cx="13.8" cy="13.3" rx="1" ry="2.1" fill="#3A2812"/><path d="M9 17 H11 L10 18.4 Z" fill="#A9571A"/></svg>
<div class="t" style="top:28.60px;height:16px;line-height:16px;font-size:9.6px;color:#989DA4;left:875.30px;letter-spacing:-0.1px;">KI...</div>
<div class="abs" style="left:909.30px;top:29.20px;width:30.10px;height:12.70px;background:#FDF0CF;border-radius:3.5px"></div>
<div class="t" style="top:29.60px;height:12px;line-height:12px;font-size:8.6px;color:#B06F12;left:912.70px;">机器人</div>
<svg class="ic" style="left:955.10px;top:29.70px;" width="14" height="13" viewBox="0 0 14 13" fill="none" stroke="#41464F" stroke-width="1.15" stroke-linecap="round" stroke-linejoin="round"><circle cx="7.4" cy="5.6" r="4.4"/><path d="M10.6 8.8 L12.8 11"/><path d="M1 10.4 H4.2 M1 12.4 H2.8" stroke-width="1"/></svg>
<svg class="ic" style="left:981.20px;top:29.60px;" width="14" height="12" viewBox="0 0 14 12" fill="none" stroke="#41464F" stroke-width="1.15" stroke-linecap="round" stroke-linejoin="round"><path d="M12.6 5.6 V2 Q12.6 1.2 11.8 1.2 H2.2 Q1.4 1.2 1.4 2 V8.4 Q1.4 9.2 2.2 9.2 H7.2"/><path d="M3.6 3.5 H6" stroke-width="1"/><path d="M10.6 7.2 V11.4 M8.5 9.3 H12.7"/></svg>
<svg class="ic" style="left:1007.60px;top:33.50px;" width="12" height="4" viewBox="0 0 12 4" fill="#373C43" stroke="none" stroke-width="1.2" stroke-linecap="round" stroke-linejoin="round"><circle cx="1.5" cy="2" r="0.95"/><circle cx="6" cy="2" r="0.95"/><circle cx="10.5" cy="2" r="0.95"/></svg>
<svg class="ic" style="left:1032.10px;top:30.00px;" width="11" height="11" viewBox="0 0 11 11" fill="none" stroke="#41464F" stroke-width="1.15" stroke-linecap="round" stroke-linejoin="round"><path d="M1 1 L10 10 M10 1 L1 10"/></svg>
<div class="abs" style="left:827.80px;top:49.40px;width:43.00px;height:19.30px;background:#D5DEFB;border-radius:5px"></div>
<svg class="ic" style="left:834.2px;top:54.3px" width="9.6" height="9.6" viewBox="0 0 12 12"><path d="M6 0.8 A5.1 5.1 0 0 1 6 11 H1.4 Q0.7 11 1.1 10.4 L1.9 9 A5.1 5.1 0 0 1 6 0.8 Z" fill="#1F4DEB"/><path d="M3.6 6.4 Q5.4 8.2 8.2 6" stroke="#D5DEFB" stroke-width="1" fill="none" stroke-linecap="round"/></svg>
<div class="t" style="top:50.90px;height:16px;line-height:16px;font-size:9.5px;color:#1F4DEB;left:845.60px;font-weight:500;">消息</div>
<svg class="ic" style="left:881.2px;top:54.2px" width="9" height="9.6" viewBox="0 0 9 9.6"><rect x="0" y="0" width="8" height="9" rx="1.2" fill="#2E62EE"/><path d="M1.6 2.2 H4.8 M1.6 4 H3.6" stroke="#fff" stroke-width="0.9"/><path d="M3.4 9.4 Q2.6 7.4 4.6 7 Q5.6 5.2 7.4 6.4 Q9.4 6.6 8.9 9.4 Z" fill="#22C3A6"/></svg>
<div class="t" style="top:51.20px;height:16px;line-height:16px;font-size:9.4px;color:#1F2329;left:892.30px;">云文档</div>
<svg class="ic" style="left:937.40px;top:54.30px;" width="9" height="9" viewBox="0 0 9 9" fill="none" stroke="#747A83" stroke-width="1.25" stroke-linecap="round" stroke-linejoin="round"><path d="M4.5 0.7 V8.3 M0.7 4.5 H8.3"/></svg>
<svg class="ic" style="left:795.4px;top:206.9px" width="25.6" height="25.6" viewBox="0 0 25.4 25.4"><defs><clipPath id="uc"><circle cx="12.7" cy="12.7" r="12.7"/></clipPath><filter id="ub" x="-10%" y="-10%" width="120%" height="120%"><feGaussianBlur stdDeviation="0.45"/></filter></defs><g clip-path="url(#uc)"><g filter="url(#ub)"><rect x="-2" y="-2" width="30" height="30" fill="#6A2E22"/><rect x="-2" y="-2" width="30" height="3" fill="#A9BDEB"/><rect x="0" y="0.9" width="26" height="1.3" fill="#CE5A22"/><rect x="0" y="3.4" width="26" height="1.3" fill="#CE5A22"/><rect x="0" y="5.9" width="26" height="1.3" fill="#CE5A22"/><rect x="0" y="8.4" width="26" height="1.3" fill="#CE5A22"/><rect x="-2" y="9.6" width="30" height="6" fill="#B8431F"/><rect x="17.5" y="8" width="9" height="7.5" fill="#7C2B22"/><rect x="-2" y="15.5" width="30" height="12" fill="#D9A57C"/><rect x="17" y="14.5" width="9" height="6.5" fill="#E8BE98"/><rect x="1" y="15" width="7" height="6.5" fill="#6E4B78"/><rect x="0" y="10" width="7" height="5" fill="#D4501E"/><path d="M7.6 11 Q12.2 8.4 16.8 11 L17.6 21.6 H6.8 Z" fill="#D9501F"/><rect x="10.6" y="11" width="3" height="10.6" fill="#EE8A26"/><rect x="14" y="12" width="3.4" height="8" fill="#BE3722"/><rect x="6.2" y="14.6" width="2.6" height="3" fill="#2A1A18"/><ellipse cx="12.2" cy="7.9" rx="4.6" ry="3.8" fill="#F4EEF0"/><circle cx="7.9" cy="5.2" r="1.5" fill="#2A2220"/><circle cx="15.6" cy="4.7" r="1.5" fill="#2A2220"/><ellipse cx="10.1" cy="7.8" rx="1.15" ry="1.5" fill="#2A2220" transform="rotate(20 10.1 7.8)"/><ellipse cx="13.8" cy="7.6" rx="1.15" ry="1.5" fill="#2A2220" transform="rotate(-20 13.8 7.6)"/><rect x="10.2" y="11" width="4.4" height="1.1" fill="#3A2A28"/><rect x="8.8" y="22.2" width="2.6" height="1.8" fill="#1E1614"/><rect x="13.6" y="22.2" width="2.6" height="1.8" fill="#1E1614"/></g></g></svg>
<div class="abs" style="left:829.10px;top:206.50px;width:203.20px;height:205.40px;background:#C7D9FD;border-radius:7px 7px 7px 1px"></div>
<svg class="ic" style="left:840.60px;top:218.10px;" width="11" height="11" viewBox="0 0 11 11" fill="none" stroke="#1A48EE" stroke-width="1.0" stroke-linecap="round" stroke-linejoin="round"><rect x="0.9" y="0.9" width="9.2" height="9.2" rx="1.7"/><rect x="3.6" y="3.6" width="3.8" height="3.8" rx="0.5"/><path d="M0.9 5.5 H3.6 M7.4 5.5 H10.1" stroke-width="0.8"/></svg>
<div class="t" style="top:215.60px;height:16px;line-height:16px;font-size:11.2px;color:#1A48EE;left:855.30px;">股价</div>
<div class="abs" style="left:839.10px;top:234.30px;width:183.80px;height:144.60px;background:#fff;border-radius:5px"></div>
<div class="abs" style="left:876.10px;top:244.00px;width:136.70px;height:10.90px;background:#F2F3F5;border-radius:1px 0 0 0"></div>
<div class="abs" style="left:855.10px;top:247.70px;width:3.60px;height:3.80px;background:#6E90F6;border-radius:0.8px"></div>
<div class="t" style="top:246.60px;height:6px;line-height:6px;font-size:3.6px;color:#2B2F36;left:860.90px;">表格</div>
<div class="t" style="top:246.60px;height:6px;line-height:6px;font-size:3.2px;color:#B0B4BA;left:870.60px;">⋮</div>
<div class="t" style="top:246.60px;height:6px;line-height:6px;font-size:3.95px;color:#2B2F36;left:881.50px;">+ 新建视图</div>
<div class="abs" style="left:848.30px;top:264.80px;width:164.50px;height:0.60px;background:#EFF0F2"></div>
<div class="abs" style="left:848.30px;top:273.90px;width:164.50px;height:0.60px;background:#EFF0F2"></div>
<div class="abs" style="left:848.30px;top:282.20px;width:164.50px;height:0.60px;background:#EFF0F2"></div>
<div class="abs" style="left:848.30px;top:290.30px;width:164.50px;height:0.60px;background:#EFF0F2"></div>
<div class="abs" style="left:848.30px;top:298.60px;width:164.50px;height:0.60px;background:#EFF0F2"></div>
<div class="abs" style="left:848.30px;top:307.00px;width:164.50px;height:0.60px;background:#EFF0F2"></div>
<div class="abs" style="left:848.30px;top:315.10px;width:164.50px;height:0.60px;background:#EFF0F2"></div>
<div class="abs" style="left:848.30px;top:323.20px;width:164.50px;height:0.60px;background:#EFF0F2"></div>
<div class="abs" style="left:848.30px;top:331.30px;width:164.50px;height:0.60px;background:#EFF0F2"></div>
<div class="abs" style="left:935.10px;top:265.00px;width:0.60px;height:70.80px;background:#D6D8DC"></div>
<div class="abs" style="left:981.20px;top:265.00px;width:0.60px;height:70.80px;background:#EFF0F2"></div>
<div class="abs" style="left:855.50px;top:268.20px;width:3.20px;height:3.20px;border:0.4px solid #9CA1A8"></div>
<div class="t" style="top:266.80px;height:6px;line-height:6px;font-size:3.8px;color:#2B2F36;left:865.00px;">A≡ 文本</div>
<div class="t" style="top:266.80px;height:6px;line-height:6px;font-size:3.8px;color:#2B2F36;left:937.20px;"># 开盘价</div>
<div class="t" style="top:266.80px;height:6px;line-height:6px;font-size:3.8px;color:#2B2F36;left:983.40px;"># 最高价</div>
<div class="t" style="top:275.50px;height:6px;line-height:6px;font-size:3.2px;color:#8F959E;left:757.00px;width:200px;text-align:center;">1</div>
<div class="t" style="top:275.50px;height:6px;line-height:6px;font-size:3.7px;color:#2B2F36;left:865.00px;">2025-01-27</div>
<div class="t" style="top:275.50px;height:6px;line-height:6px;font-size:3.7px;color:#2B2F36;left:679.90px;width:300px;text-align:right;">37.7</div>
<div class="t" style="top:283.70px;height:6px;line-height:6px;font-size:3.2px;color:#8F959E;left:757.00px;width:200px;text-align:center;">2</div>
<div class="t" style="top:283.70px;height:6px;line-height:6px;font-size:3.7px;color:#2B2F36;left:865.00px;">2025-02-03</div>
<div class="t" style="top:283.70px;height:6px;line-height:6px;font-size:3.7px;color:#2B2F36;left:679.90px;width:300px;text-align:right;">38.9</div>
<div class="t" style="top:291.90px;height:6px;line-height:6px;font-size:3.2px;color:#8F959E;left:757.00px;width:200px;text-align:center;">3</div>
<div class="t" style="top:291.90px;height:6px;line-height:6px;font-size:3.7px;color:#2B2F36;left:865.00px;">2025-02-04</div>
<div class="t" style="top:291.90px;height:6px;line-height:6px;font-size:3.7px;color:#2B2F36;left:679.90px;width:300px;text-align:right;">38.7</div>
<div class="t" style="top:300.10px;height:6px;line-height:6px;font-size:3.2px;color:#8F959E;left:757.00px;width:200px;text-align:center;">4</div>
<div class="t" style="top:300.10px;height:6px;line-height:6px;font-size:3.7px;color:#2B2F36;left:865.00px;">2025-02-05</div>
<div class="t" style="top:300.10px;height:6px;line-height:6px;font-size:3.7px;color:#2B2F36;left:679.90px;width:300px;text-align:right;">40.0</div>
<div class="t" style="top:308.30px;height:6px;line-height:6px;font-size:3.2px;color:#8F959E;left:757.00px;width:200px;text-align:center;">5</div>
<div class="t" style="top:308.30px;height:6px;line-height:6px;font-size:3.7px;color:#2B2F36;left:865.00px;">2025-02-06</div>
<div class="t" style="top:308.30px;height:6px;line-height:6px;font-size:3.7px;color:#2B2F36;left:679.90px;width:300px;text-align:right;">39.8</div>
<div class="t" style="top:316.50px;height:6px;line-height:6px;font-size:3.2px;color:#8F959E;left:757.00px;width:200px;text-align:center;">6</div>
<div class="t" style="top:316.50px;height:6px;line-height:6px;font-size:3.7px;color:#2B2F36;left:865.00px;">2025-02-07</div>
<div class="t" style="top:316.50px;height:6px;line-height:6px;font-size:3.7px;color:#2B2F36;left:679.90px;width:300px;text-align:right;">40.7</div>
<div class="t" style="top:324.70px;height:6px;line-height:6px;font-size:3.2px;color:#8F959E;left:757.00px;width:200px;text-align:center;">7</div>
<div class="t" style="top:324.70px;height:6px;line-height:6px;font-size:3.7px;color:#2B2F36;left:865.00px;">2025-02-10</div>
<div class="t" style="top:324.70px;height:6px;line-height:6px;font-size:3.7px;color:#2B2F36;left:679.90px;width:300px;text-align:right;">42.7</div>
<div class="abs" style="left:848px;top:333px;width:165px;height:2.8px;overflow:hidden"><div class="t" style="top:0.30px;height:6px;line-height:6px;font-size:3.2px;color:#8F959E;left:-91px;width:200px;text-align:center;">8</div><div class="t" style="top:0.30px;height:6px;line-height:6px;font-size:3.7px;color:#2B2F36;left:17.00px;">2025-02-11</div><div class="t" style="top:0.30px;height:6px;line-height:6px;font-size:3.7px;color:#2B2F36;left:-168.10px;width:300px;text-align:right;">44.0</div></div>
<div class="abs" style="left:848.40px;top:342.00px;width:164.70px;height:1.40px;background:#E9EAEC"></div>
<div class="t" style="top:351.50px;height:16px;line-height:16px;font-size:11.0px;color:#1F2329;left:849.30px;">小咪<span class="em">🐱</span></div>
<svg class="ic" style="left:872.70px;top:354.70px;opacity:1" width="8.8" height="9.59" viewBox="0 0 20 22"><defs><radialGradient id="cg2" cx="0.5" cy="0.45" r="0.6"><stop offset="0" stop-color="#FFEB84"/><stop offset="0.6" stop-color="#FFCB2E"/><stop offset="1" stop-color="#EBA51C"/></radialGradient></defs><path d="M2.2 1 Q5.5 2.2 7.6 4.4 Q10 3.6 12.4 4.4 Q14.5 2.2 17.8 1 Q19 5 18.6 8.6 Q20 12 19 14.6 Q17 19.5 10 21.5 Q3 19.5 1 14.6 Q0 12 1.4 8.6 Q1 5 2.2 1 Z" fill="url(#cg2)"/><path d="M3.6 3.4 L6.4 5.8 L3.5 7.6 Z M16.4 3.4 L13.6 5.8 L16.5 7.6 Z" fill="#D68A14" opacity="0.75"/><ellipse cx="6.2" cy="13.3" rx="1" ry="2.1" fill="#3A2812"/><ellipse cx="13.8" cy="13.3" rx="1" ry="2.1" fill="#3A2812"/><path d="M9 17 H11 L10 18.4 Z" fill="#A9571A"/></svg>
<div class="t" style="top:351.50px;height:16px;line-height:16px;font-size:11.0px;color:#1F4DEB;left:889.30px;">可编辑</div>
<svg class="ic" style="left:926.00px;top:357.30px;" width="8" height="5" viewBox="0 0 8 5" fill="none" stroke="#1F4DEB" stroke-width="1.1" stroke-linecap="round" stroke-linejoin="round"><path d="M1 1 L4 4 L7 1"/></svg>
<svg class="ic" style="left:997.90px;top:353.80px;" width="11" height="11" viewBox="0 0 11 11" fill="none" stroke="#41464F" stroke-width="1.1" stroke-linecap="round" stroke-linejoin="round"><rect x="1" y="3.2" width="6.8" height="6.8" rx="0.8"/><path d="M3.4 1 H9.4 Q10 1 10 1.6 V7.8"/></svg>
<div class="abs" style="left:839.00px;top:385.00px;width:64.00px;height:19.40px;background:#ABC1F8;border-radius:10px"></div>
<svg class="ic" style="left:845.3px;top:387.9px" width="14.4" height="13.2" viewBox="0 0 14.4 13.2"><defs><radialGradient id="ef" cx="0.45" cy="0.3" r="0.75"><stop offset="0" stop-color="#FFF38F"/><stop offset="0.55" stop-color="#FFD83A"/><stop offset="1" stop-color="#F7B022"/></radialGradient></defs><ellipse cx="7" cy="6.3" rx="5.9" ry="5.7" fill="url(#ef)"/><path d="M11.6 3.4 L12.6 1.2 M12.6 3.9 L13.8 1.6" stroke="#8F8FA8" stroke-width="0.5" fill="none"/><ellipse cx="4.9" cy="5.9" rx="1.55" ry="1.35" fill="#fff"/><ellipse cx="9.3" cy="5.9" rx="1.55" ry="1.35" fill="#fff"/><ellipse cx="5.1" cy="6.2" rx="0.85" ry="0.95" fill="#7A1C10"/><ellipse cx="9.1" cy="6.2" rx="0.85" ry="0.95" fill="#7A1C10"/><path d="M3.2 4.8 H6.5 M7.7 4.8 H11" stroke="#B5651D" stroke-width="0.5"/><circle cx="1.9" cy="9.2" r="1.6" fill="#FFD13A"/><circle cx="12.4" cy="8.6" r="1.6" fill="#FFD13A"/><rect x="1" y="10.2" width="12.8" height="2.2" fill="#ECECEC"/><path d="M1.6 11 H13.2" stroke="#B8B8B8" stroke-width="0.6" stroke-dasharray="1 0.5"/><rect x="0.6" y="12.2" width="13.4" height="0.9" fill="#7E7E7E"/></svg>
<div class="abs" style="left:863.40px;top:390.80px;width:0.60px;height:8.80px;background:#9FB6F0"></div>
<div class="t" style="top:386.90px;height:16px;line-height:16px;font-size:9.5px;color:#6B717A;left:868.10px;">小咪<span class="em">🐱</span></div>
<svg class="ic" style="left:888.20px;top:391.01px;opacity:1" width="7.5" height="8.18" viewBox="0 0 20 22"><defs><radialGradient id="cg3" cx="0.5" cy="0.45" r="0.6"><stop offset="0" stop-color="#FFEB84"/><stop offset="0.6" stop-color="#FFCB2E"/><stop offset="1" stop-color="#EBA51C"/></radialGradient></defs><path d="M2.2 1 Q5.5 2.2 7.6 4.4 Q10 3.6 12.4 4.4 Q14.5 2.2 17.8 1 Q19 5 18.6 8.6 Q20 12 19 14.6 Q17 19.5 10 21.5 Q3 19.5 1 14.6 Q0 12 1.4 8.6 Q1 5 2.2 1 Z" fill="url(#cg3)"/><path d="M3.6 3.4 L6.4 5.8 L3.5 7.6 Z M16.4 3.4 L13.6 5.8 L16.5 7.6 Z" fill="#D68A14" opacity="0.75"/><ellipse cx="6.2" cy="13.3" rx="1" ry="2.1" fill="#3A2812"/><ellipse cx="13.8" cy="13.3" rx="1" ry="2.1" fill="#3A2812"/><path d="M9 17 H11 L10 18.4 Z" fill="#A9571A"/></svg>
<svg class="ic" style="left:829.3px;top:420.6px" width="9" height="9" viewBox="0 0 9 9"><path d="M0.5 1.2 Q0.5 0.5 1.2 0.5 H7.8 Q8.5 0.5 8.5 1.2 V5.8 Q8.5 6.5 7.8 6.5 H5.4 L4.3 8.4 L3.4 6.5 H1.2 Q0.5 6.5 0.5 5.8 Z" fill="#1F4DEB"/><path d="M2.4 3.5 H2.9 M4.2 3.5 H4.8 M6.1 3.5 H6.6" stroke="#fff" stroke-width="0.9" stroke-linecap="round"/></svg>
<div class="t" style="top:417.70px;height:16px;line-height:16px;font-size:9.45px;color:#1F4DEB;left:842.00px;"><span style="font-size:10.4px">1</span> 条回复</div>
<div class="abs" style="left:829.10px;top:444.90px;width:203.20px;height:119.00px;background:#C7D9FD;border-radius:7px"></div>
<div class="abs" style="left:838.80px;top:456.00px;width:1.20px;height:10.60px;background:#B9B4A8"></div>
<div class="t" style="top:453.30px;height:16px;line-height:16px;font-size:9.55px;color:#646A73;left:843.90px;letter-spacing:0.2px;">回复 Draco正在Vibe Coding:</div>
<svg class="ic" style="left:980.10px;top:456.90px;" width="9" height="9" viewBox="0 0 9 9" fill="none" stroke="#646A73" stroke-width="0.95" stroke-linecap="round" stroke-linejoin="round"><rect x="0.8" y="0.8" width="7.4" height="7.4" rx="1.3"/><rect x="3" y="3" width="3" height="3" rx="0.4"/></svg>
<div class="t" style="top:453.30px;height:16px;line-height:16px;font-size:9.4px;color:#646A73;left:993.00px;">股价</div>
<div class="t" style="top:476.60px;height:16px;line-height:16px;font-size:11.25px;color:#1F2329;left:839.10px;">请基于这个多维表格新建一个tab，</div>
<div class="t" style="top:492.70px;height:16px;line-height:16px;font-size:11.25px;color:#1F2329;left:839.10px;">将过去10年能源行业股息率比较稳定</div>
<div class="t" style="top:508.80px;height:16px;line-height:16px;font-size:11.25px;color:#1F2329;left:839.10px;">且较高的股票写进去，格式是：股票</div>
<div class="t" style="top:524.70px;height:16px;line-height:16px;font-size:11.25px;color:#1F2329;left:839.10px;">代码<span style="font-weight:700;color:#33373D">｜</span>股票名称<span style="font-weight:700;color:#33373D">｜</span>年份<span style="font-weight:700;color:#33373D">｜</span>股息率<span style="font-weight:700;color:#33373D">｜</span>行</div>
<div class="t" style="top:541.10px;height:16px;line-height:16px;font-size:11.25px;color:#1F2329;left:839.10px;">业</div>
<div class="abs" style="left:795.30px;top:579.30px;width:251.60px;height:65.40px;background:#fff;border:1px solid #DADCE0;border-radius:7px"></div>
<div class="t" style="top:590.90px;height:16px;line-height:16px;font-size:11.1px;color:#9EA3AA;left:805.90px;">发送给 小咪<span class="em">🐱</span></div>
<svg class="ic" style="left:866.30px;top:594.19px;opacity:0.62" width="9.2" height="10.03" viewBox="0 0 20 22"><defs><radialGradient id="cg4" cx="0.5" cy="0.45" r="0.6"><stop offset="0" stop-color="#FFEB84"/><stop offset="0.6" stop-color="#FFCB2E"/><stop offset="1" stop-color="#EBA51C"/></radialGradient></defs><path d="M2.2 1 Q5.5 2.2 7.6 4.4 Q10 3.6 12.4 4.4 Q14.5 2.2 17.8 1 Q19 5 18.6 8.6 Q20 12 19 14.6 Q17 19.5 10 21.5 Q3 19.5 1 14.6 Q0 12 1.4 8.6 Q1 5 2.2 1 Z" fill="url(#cg4)"/><path d="M3.6 3.4 L6.4 5.8 L3.5 7.6 Z M16.4 3.4 L13.6 5.8 L16.5 7.6 Z" fill="#D68A14" opacity="0.75"/><ellipse cx="6.2" cy="13.3" rx="1" ry="2.1" fill="#3A2812"/><ellipse cx="13.8" cy="13.3" rx="1" ry="2.1" fill="#3A2812"/><path d="M9 17 H11 L10 18.4 Z" fill="#A9571A"/></svg>
<div class="t" style="top:617.40px;height:16px;line-height:16px;font-size:13.6px;color:#41464F;left:841.40px;letter-spacing:-0.3px;">A<span style="font-size:10.2px">a</span></div>
<svg class="ic" style="left:865.80px;top:619.00px;" width="14" height="14" viewBox="0 0 14 14" fill="none" stroke="#41464F" stroke-width="1.1" stroke-linecap="round" stroke-linejoin="round"><circle cx="7" cy="7" r="5.6"/><path d="M4.6 8.2 Q7 10.6 9.4 8.2"/><circle cx="5.1" cy="5.6" r="0.7" fill="#41464F" stroke="none"/><circle cx="8.9" cy="5.6" r="0.7" fill="#41464F" stroke="none"/></svg>
<svg class="ic" style="left:889.80px;top:619.00px;" width="14" height="14" viewBox="0 0 14 14" fill="none" stroke="#41464F" stroke-width="1.1" stroke-linecap="round" stroke-linejoin="round"><circle cx="7" cy="7" r="2.3"/><path d="M9.3 4.8 V7.6 A1.6 1.6 0 0 0 12.5 7.4 A5.6 5.6 0 1 0 10.2 11.6"/></svg>
<svg class="ic" style="left:913.90px;top:619.00px;" width="14" height="14" viewBox="0 0 14 14" fill="none" stroke="#41464F" stroke-width="1.1" stroke-linecap="round" stroke-linejoin="round"><circle cx="3.2" cy="10.4" r="2"/><circle cx="10.8" cy="10.4" r="2"/><path d="M4.4 8.8 L10 1.4 M9.6 8.8 L4 1.4"/></svg>
<svg class="ic" style="left:929.00px;top:624.20px;" width="6" height="4" viewBox="0 0 6 4" fill="none" stroke="#41464F" stroke-width="1" stroke-linecap="round" stroke-linejoin="round"><path d="M1 1 L3 3 L5 1"/></svg>
<svg class="ic" style="left:944.70px;top:619.00px;" width="14" height="14" viewBox="0 0 14 14" fill="none" stroke="#41464F" stroke-width="1.1" stroke-linecap="round" stroke-linejoin="round"><circle cx="7" cy="7" r="5.6"/><path d="M7 4.2 V9.8 M4.2 7 H9.8"/></svg>
<svg class="ic" style="left:970.00px;top:620.00px;" width="12" height="12" viewBox="0 0 12 12" fill="none" stroke="#41464F" stroke-width="1.15" stroke-linecap="round" stroke-linejoin="round"><path d="M7.4 1.4 H10.6 V4.6 M10.4 1.6 L7 5 M4.6 10.6 H1.4 V7.4 M1.6 10.4 L5 7"/></svg>
<svg class="ic" style="left:1000px;top:618.6px" width="15" height="14" viewBox="0 0 15 14"><path d="M0.8 0.6 L14.4 7 L0.8 13.4 L2.6 7.8 L8 7 L2.6 6.2 Z" fill="#BBBFC4"/></svg>
<div class="abs" style="left:1021.10px;top:619.00px;width:0.70px;height:13.00px;background:#DEE0E3"></div>
<svg class="ic" style="left:1026.00px;top:623.90px;" width="7" height="5" viewBox="0 0 7 5" fill="none" stroke="#A5A9AF" stroke-width="1" stroke-linecap="round" stroke-linejoin="round"><path d="M1.2 1.2 L3.5 3.6 L5.8 1.2"/></svg>
</div>
</body></html>
